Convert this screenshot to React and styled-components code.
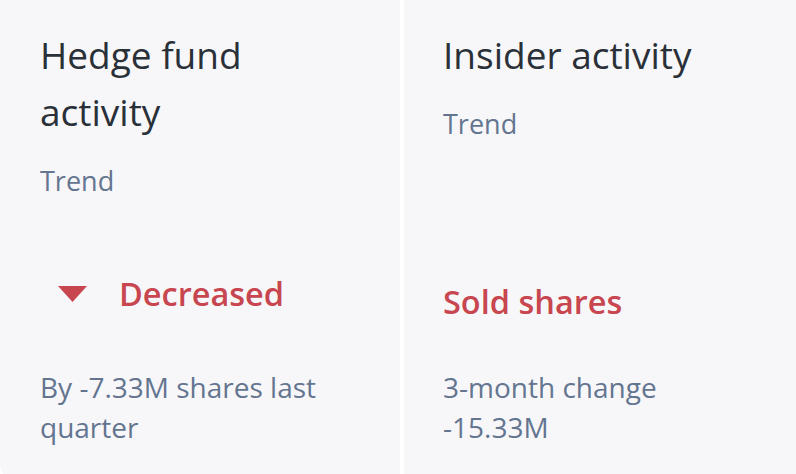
import React from "react";
import styled, { createGlobalStyle } from "styled-components";

const Global = createGlobalStyle`
  html, body { margin: 0; padding: 0; background: #ffffff; }
  body { font-family: "Open Sans", "Noto Sans", sans-serif; }
`;

const Row = styled.div`
  display: flex;
  gap: 4px;
  width: 796px;
  height: 474px;
  overflow: hidden;
`;

const Card = styled.section`
  flex: 0 0 ${(p) => p.$width}px;
  height: 480px;
  box-sizing: border-box;
  background: #f7f7f9;
  padding: 26px 30px 0 ${(p) => p.$padLeft}px;
  border-radius: ${(p) => (p.$first ? "0 0 0 16px" : "0")};
  display: flex;
  flex-direction: column;
`;

const Title = styled.h2`
  margin: 0;
  font-size: 37px;
  line-height: 57px;
  font-weight: 400;
  color: #2a3038;
`;

const Sub = styled.div`
  margin-top: 21px;
  font-size: 27px;
  line-height: 40px;
  color: #647590;
`;

const Bottom = styled.div`
  margin-top: auto;
  padding-bottom: 33px;
`;

const Value = styled.div`
  display: flex;
  align-items: center;
  gap: 32px;
  padding-left: ${(p) => p.$indent}px;
  margin-bottom: ${(p) => p.$gap}px;
  font-size: 32.5px;
  line-height: 40px;
  font-weight: 600;
  color: #c8464f;
`;

const Desc = styled.div`
  font-size: 28px;
  line-height: 40px;
  color: #647590;
`;

const Arrow = () => (
  <svg width="29" height="16" viewBox="0 0 29 16" aria-hidden="true">
    <path d="M0 0 H29 L14.5 16 Z" fill="#c8464f" />
  </svg>
);

export default function App() {
  return (
    <>
      <Global />
      <Row>
        <Card $width={400} $padLeft={40} $first>
          <Title>
            Hedge fund
            <br />
            activity
          </Title>
          <Sub>Trend</Sub>
          <Bottom>
            <Value $indent={18} $gap={53}>
              <Arrow />
              Decreased
            </Value>
            <Desc>
              By -7.33M shares last
              <br />
              quarter
            </Desc>
          </Bottom>
        </Card>
        <Card $width={392} $padLeft={39}>
          <Title>Insider activity</Title>
          <Sub>Trend</Sub>
          <Bottom>
            <Value $indent={0} $gap={45}>
              Sold shares
            </Value>
            <Desc>
              3-month change
              <br />
              -15.33M
            </Desc>
          </Bottom>
        </Card>
      </Row>
    </>
  );
}
